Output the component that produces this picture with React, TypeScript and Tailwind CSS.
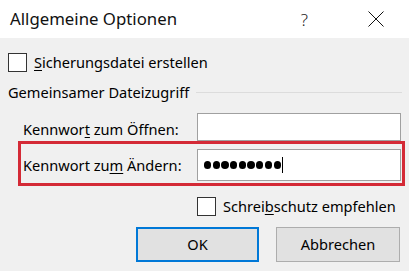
import React from "react";

export default function App() {
  const dots = Array.from({ length: 9 });
  return (
    <div
      className="w-[409px] h-[271px] flex flex-col bg-[#f0f0f0] text-black overflow-hidden"
      style={{ fontFamily: '"Noto Sans", "Open Sans", sans-serif' }}
    >
      {/* Title bar */}
      <div className="h-[38px] bg-white flex items-center shrink-0">
        <div className="pl-[10px] flex-1 text-[16.8px] leading-none text-[#111]">Allgemeine Optionen</div>
        <div className="text-[17px] leading-none text-[#222] font-light mr-[60px]">?</div>
        <svg width="16" height="16" viewBox="0 0 16 16" className="mr-[25px]">
          <path d="M0.5 0.5 L15.5 15.5 M15.5 0.5 L0.5 15.5" stroke="#111" strokeWidth="1" fill="none" />
        </svg>
      </div>

      {/* Body */}
      <div className="flex flex-col text-[14.6px] leading-none">
        {/* Checkbox 1 */}
        <div className="flex items-center pl-[8px] mt-[15px] h-[19px]">
          <div className="w-[19px] h-[19px] border border-[#333] bg-white shrink-0" />
          <span className="ml-[7px]">
            <u className="underline-offset-2">S</u>icherungsdatei erstellen
          </span>
        </div>

        {/* Group header */}
        <div className="flex items-center mt-[12px] h-[16px]">
          <span className="pl-[8px] whitespace-nowrap">Gemeinsamer Dateizugriff</span>
          <div className="flex-1 h-px bg-[#dcdcdc] ml-[7px] mr-[7px] mt-[1px]" />
        </div>

        {/* Row 1 */}
        <div className="flex items-center pl-[23px] mt-[13px]">
          <span className="w-[174px] whitespace-nowrap pt-[4px]">
            Kennwor<u className="underline-offset-2">t</u> zum Öffnen:
          </span>
          <div className="w-[204px] h-[28px] border border-[#a0a0a0] bg-white" />
        </div>

        {/* Row 2 (highlighted) */}
        <div className="ml-[18px] w-[387px] h-[45px] border-[3px] border-[#d42a36] flex items-start pt-[5px]">
          <span className="w-[176px] pl-[2px] whitespace-nowrap h-[32px] flex items-center pt-[1px]">
            <span>
              Kennwort zu<u className="underline-offset-2">m</u> Ändern:
            </span>
          </span>
          <div className="w-[204px] h-[32px] border border-[#a0a0a0] bg-white flex items-center pl-[6px]">
            <div className="flex items-center gap-[1.5px]">
              {dots.map((_, i) => (
                <span key={i} className="block w-[7.2px] h-[7.2px] rounded-full bg-black" />
              ))}
            </div>
            <div className="w-px h-[16px] bg-black ml-[1px]" />
          </div>
        </div>

        {/* Checkbox 2 */}
        <div className="flex items-center pl-[197px] mt-[11px] h-[19px]">
          <div className="w-[19px] h-[19px] border border-[#333] bg-white shrink-0" />
          <span className="ml-[7px] whitespace-nowrap">
            Schrei<u className="underline-offset-2">b</u>schutz empfehlen
          </span>
        </div>

        {/* Buttons */}
        <div className="flex pl-[136px] mt-[11px] gap-[17px]">
          <div className="w-[123px] h-[35px] border-2 border-[#0078d7] bg-[#e1e1e1] flex items-center justify-center">
            OK
          </div>
          <div className="w-[124px] h-[35px] border border-[#adadad] bg-[#e1e1e1] flex items-center justify-center">
            Abbrechen
          </div>
        </div>
      </div>
    </div>
  );
}
